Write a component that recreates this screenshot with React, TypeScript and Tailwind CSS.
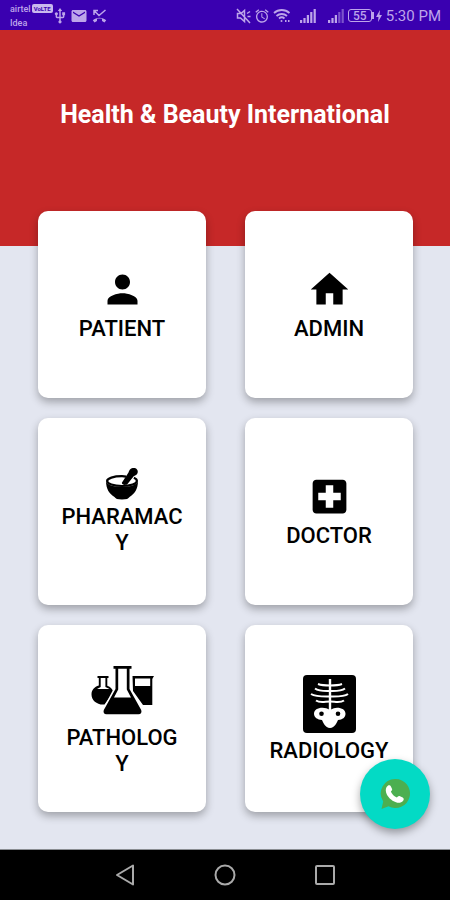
import type { ReactNode } from "react";
import { MdAlarm, MdHome, MdLocalHospital, MdMail, MdPerson, MdUsb } from "react-icons/md";

type Tile = {
  label: string;
  icon: ReactNode;
};

function MortarIcon() {
  return (
    <svg viewBox="0 0 32 32" className="h-8 w-8" fill="currentColor" aria-hidden="true">
      <path d="M0 13c0 8 3.500 13 8.500 16 1 1.700 3 2.500 7.500 2.500s6.500-.8 7.500-2.500c5-3 8.500-8 8.500-16 0 3-7 6-16 6S0 16 0 13Z" />
      <path
        d="M20 8.600C18.500 8.300 17.300 8.200 16 8.200 7.500 8.200 1.100 10.300 1.100 13S7.500 18 16 18s14.900-2.200 14.900-5c0-1.300-1-2.300-3-3.200"
        fill="none"
        stroke="currentColor"
        strokeWidth="2.200"
      />
      <path d="m16 14.500 6.500-10c.6-3 3.500-5.300 6.300-4.400 2.800.9 3.800 3.700 2.300 5.900-.8 1.100-2.200 1.600-3.200 2L21.500 16c-1.400 1.600-6.500 1-5.500-1.500Z" />
    </svg>
  );
}

function FlasksIcon() {
  return (
    <svg viewBox="0 0 63 60" className="h-[60px] w-[63px]" fill="currentColor" aria-hidden="true">
      {/* round flask */}
      <path d="M6.500 15h11v2h-1.200v7.700c3.200 1.300 5.200 3.300 6.200 6.300l-9 12.500C6.500 44.300.5 39.500.5 33.500c0-4.500 3-7.600 7.300-8.900V17H6.500Z" />
      <path d="M9.700 17h4.700v9l4.200 2H6l3.700-2Z" fill="white" />
      {/* beaker */}
      <path d="M41.500 15H63l-1.700 3v26H52l-10-14Z" />
      <path d="M44 17.500h15.200V25H44Z" fill="white" />
      {/* centre flask */}
      <path
        d="M24.500 5.500v22L13 49c-.8 2.500.3 4.300 3 4.300h31c2.700 0 4-1.800 3-4.300L38.500 27.500v-22Z"
        fill="white"
        stroke="white"
        strokeWidth="3"
      />
      <path d="M22.500 5h18v2.800h-2V28l11.700 21c.8 2.300-.2 4.300-2.700 4.300h-32c-2.500 0-3.500-2-2.700-4.300l11.700-21V7.800h-2Z" />
      <path d="M27.200 7.800h8.600v20.700l4.200 8H23l4.200-8Z" fill="white" />
    </svg>
  );
}

function XrayIcon() {
  return (
    <svg viewBox="0 0 53 60" className="h-[60px] w-[53px]" aria-hidden="true">
      <rect y="1" width="53" height="58" rx="4" fill="black" />
      <g fill="none" stroke="white" strokeWidth="2">
        <path d="M27 5v32" strokeWidth="2.400" />
        <path d="M15 10c4 1.500 8 1.500 12 1.500S35 11.500 39 10" />
        <path d="M12 14.500c4 3 10 2.500 15 2.500s11 .5 15-2.500" />
        <path d="M8 20c5 3 13 2.500 19 2.500s14 .5 18-2.500" />
        <path d="M13 26.500c4 3 9 1 14 1s10 2 14-1" />
      </g>
      <path
        d="M27 36c3-1.500 5-2.200 7-2.200 5 0 8.500 2.200 8.500 6 0 3.600-3 6-7.500 6.200-1.500 3-3 7.500-8 8-5-.5-6.500-5-8-8-4.500-.2-8-2.600-8-6.200 0-3.800 3.500-6 8.500-6 2.500 0 5 .7 7.500 2.200Z"
        fill="white"
      />
      <circle cx="18.500" cy="39.800" r="2.300" />
      <circle cx="35" cy="39.800" r="2.300" />
    </svg>
  );
}

const tiles: Tile[] = [
  { label: "PATIENT", icon: <MdPerson className="size-[45px]" /> },
  { label: "ADMIN", icon: <MdHome className="size-[45px]" /> },
  { label: "PHARAMACY", icon: <MortarIcon /> },
  { label: "DOCTOR", icon: <MdLocalHospital className="size-[45px]" /> },
  { label: "PATHOLOGY", icon: <FlasksIcon /> },
  { label: "RADIOLOGY", icon: <XrayIcon /> },
];

function UsbIcon() {
  return <MdUsb viewBox="4 1 16 22" className="h-4 w-3" />;
}

function MissedCallIcon() {
  return (
    <svg viewBox="0 0 15 14" className="h-[14px] w-[15px]" aria-hidden="true">
      <path d="M2 6V1.500h4M2 1.500l5 5L13.500 1" fill="none" stroke="currentColor" strokeWidth="1.500" />
      <path d="M.8 11.300c3.500-3.500 9.900-3.500 13.400 0L12.500 13.500 10 12V9.800c-1.700-.5-3.300-.5-5 0V12l-2.500 1.500Z" fill="currentColor" />
    </svg>
  );
}

function MutedIcon() {
  return (
    <svg viewBox="0 0 15 16" className="h-4 w-[15px]" fill="none" stroke="currentColor" strokeWidth="1.500" aria-hidden="true">
      <path d="M1.500 5.500v4.500h3l4 3.500V2.500L5 5.500ZM1 1l13 14M11 5.500l3-2M11.500 8.500h3" />
    </svg>
  );
}

function WifiIcon() {
  return (
    <svg viewBox="0 0 18 15" className="h-[15px] w-[18px]" fill="none" stroke="currentColor" strokeWidth="1.800" aria-hidden="true">
      <path d="M1 5c4.500-4 11-4 15.500 0M3.500 8c3-2.700 7.500-2.700 10.500 0M6 10.500c1.700-1.500 3.800-1.500 5.500 0" />
      <circle cx="8.500" cy="13" r="1" fill="currentColor" stroke="none" />
      <path d="M12 13h1.500M15 13h1.500" />
    </svg>
  );
}

function SignalIcon({ faded = false }: { faded?: boolean }) {
  return (
    <svg viewBox="0 0 16 14" className="h-[14px] w-4" fill="currentColor" aria-hidden="true">
      <path d="M0 11h2.200v3H0ZM3.400 9h2.200v5H3.400ZM6.800 6H9v8H6.800Z" />
      <path d="M10.200 3h2.200v11h-2.200ZM13.600 0h2.200v14h-2.200Z" opacity={faded ? 0.5 : 1} />
    </svg>
  );
}

function StatusBar() {
  return (
    <div className="flex h-[30px] items-center justify-between bg-[#3a00b0] pt-px pr-[9px] pl-[10px] text-[#bda5ea]">
      <div className="flex items-center gap-1">
        <div className="w-[40px] text-[9px] leading-[14px] font-medium">
          <div className="flex items-center gap-px">
            airtel
            <span className="rounded-xs bg-[#c9b8ee] px-0.5 text-[6px] leading-[9px] font-bold text-[#3a00b0]">VoLTE</span>
          </div>
          <div>Idea</div>
        </div>
        <UsbIcon />
        <MdMail className="size-[18px]" />
        <MissedCallIcon />
      </div>
      <div className="flex items-center">
        <MutedIcon />
        <MdAlarm className="ml-[3px] size-4" />
        <span className="ml-[3px]">
          <WifiIcon />
        </span>
        <span className="ml-[9px]">
          <SignalIcon />
        </span>
        <span className="ml-3">
          <SignalIcon faded />
        </span>
        <span className="ml-1 flex items-center">
          <span className="flex h-[13px] w-6 items-center justify-center rounded-[3px] border border-current text-[12px] font-medium">55</span>
          <span className="h-[7px] w-0.5 bg-current" />
        </span>
        <svg viewBox="0 0 6 12" className="ml-0.5 h-3 w-1.5" fill="currentColor" aria-hidden="true">
          <path d="M4 0 0 7h2.500L2 12l4-7H3.500Z" />
        </svg>
        <time className="ml-1 text-[15px] leading-5">5:30 PM</time>
      </div>
    </div>
  );
}

function NavBar() {
  return (
    <nav className="flex h-[51px] items-center justify-center gap-19 border-t border-[#8a8d92] bg-black text-[#aaaaaa]">
      <button type="button" aria-label="Back">
        <svg viewBox="0 0 24 24" className="size-6" fill="none" stroke="currentColor" strokeWidth="2">
          <path d="M20 2.500v19L4 12Z" strokeLinejoin="round" />
        </svg>
      </button>
      <button type="button" aria-label="Home">
        <svg viewBox="0 0 24 24" className="size-6" fill="none" stroke="currentColor" strokeWidth="2">
          <circle cx="12" cy="12" r="9.500" />
        </svg>
      </button>
      <button type="button" aria-label="Recent apps">
        <svg viewBox="0 0 24 24" className="size-6" fill="none" stroke="currentColor" strokeWidth="2">
          <rect x="3" y="3" width="18" height="18" rx="1" />
        </svg>
      </button>
    </nav>
  );
}

export default function App() {
  return (
    <div className="flex min-h-screen flex-col bg-[#e3e6f0] font-['Roboto',sans-serif]">
      <StatusBar />
      <header className="h-[216px] bg-[#c62828] px-4 pt-[69px] text-center">
        <h1 className="text-[25px] leading-8 font-bold text-white">Health &amp; Beauty International</h1>
      </header>

      <main className="relative -mt-[35px] flex flex-1 flex-col pr-[37px] pb-[37px] pl-[38px]">
        <div className="grid flex-1 auto-rows-fr grid-cols-2 gap-x-[39px] gap-y-5">
          {tiles.map(t => (
            <button
              key={t.label}
              type="button"
              className="flex flex-col items-center justify-center gap-1 rounded-[10px] bg-white px-[22px] text-black shadow-[0_4px_9px_rgba(0,0,0,0.3)]"
            >
              {t.icon}
              <span className="w-full text-center text-[22px] leading-[26px] font-medium break-all">{t.label}</span>
            </button>
          ))}
        </div>

        <button
          type="button"
          aria-label="WhatsApp"
          className="absolute right-5 bottom-5 flex size-[70px] items-center justify-center rounded-full bg-[#03dac5] shadow-[0_4px_9px_rgba(0,0,0,0.35)]"
        >
          <svg viewBox="0 0 30 30" className="size-[30px]" aria-hidden="true">
            <path d="M15.500 0a14.500 14.500 0 1 1-7 27.200L1.500 30l1.700-7.500A14.500 14.500 0 0 1 15.500 0Z" fill="#4caf50" />
            <path
              d="M7.800 6.700c1.200-.9 2.600-.4 3.100.7l1.200 2.600c.4 1-.8 2-1.200 2.700 1.200 2.600 3.300 4.600 6 5.700.8-.5 1.500-1.900 2.600-1.400l3.200 1.500c1.300.7 1.300 2.200.4 3.300-1.700 2-4.400 2.500-7.100 1.500-4.800-1.800-8.500-5.300-9.900-9.800-.7-2.700-.3-5.300 1.700-6.800Z"
              fill="white"
            />
          </svg>
        </button>
      </main>

      <NavBar />
    </div>
  );
}
